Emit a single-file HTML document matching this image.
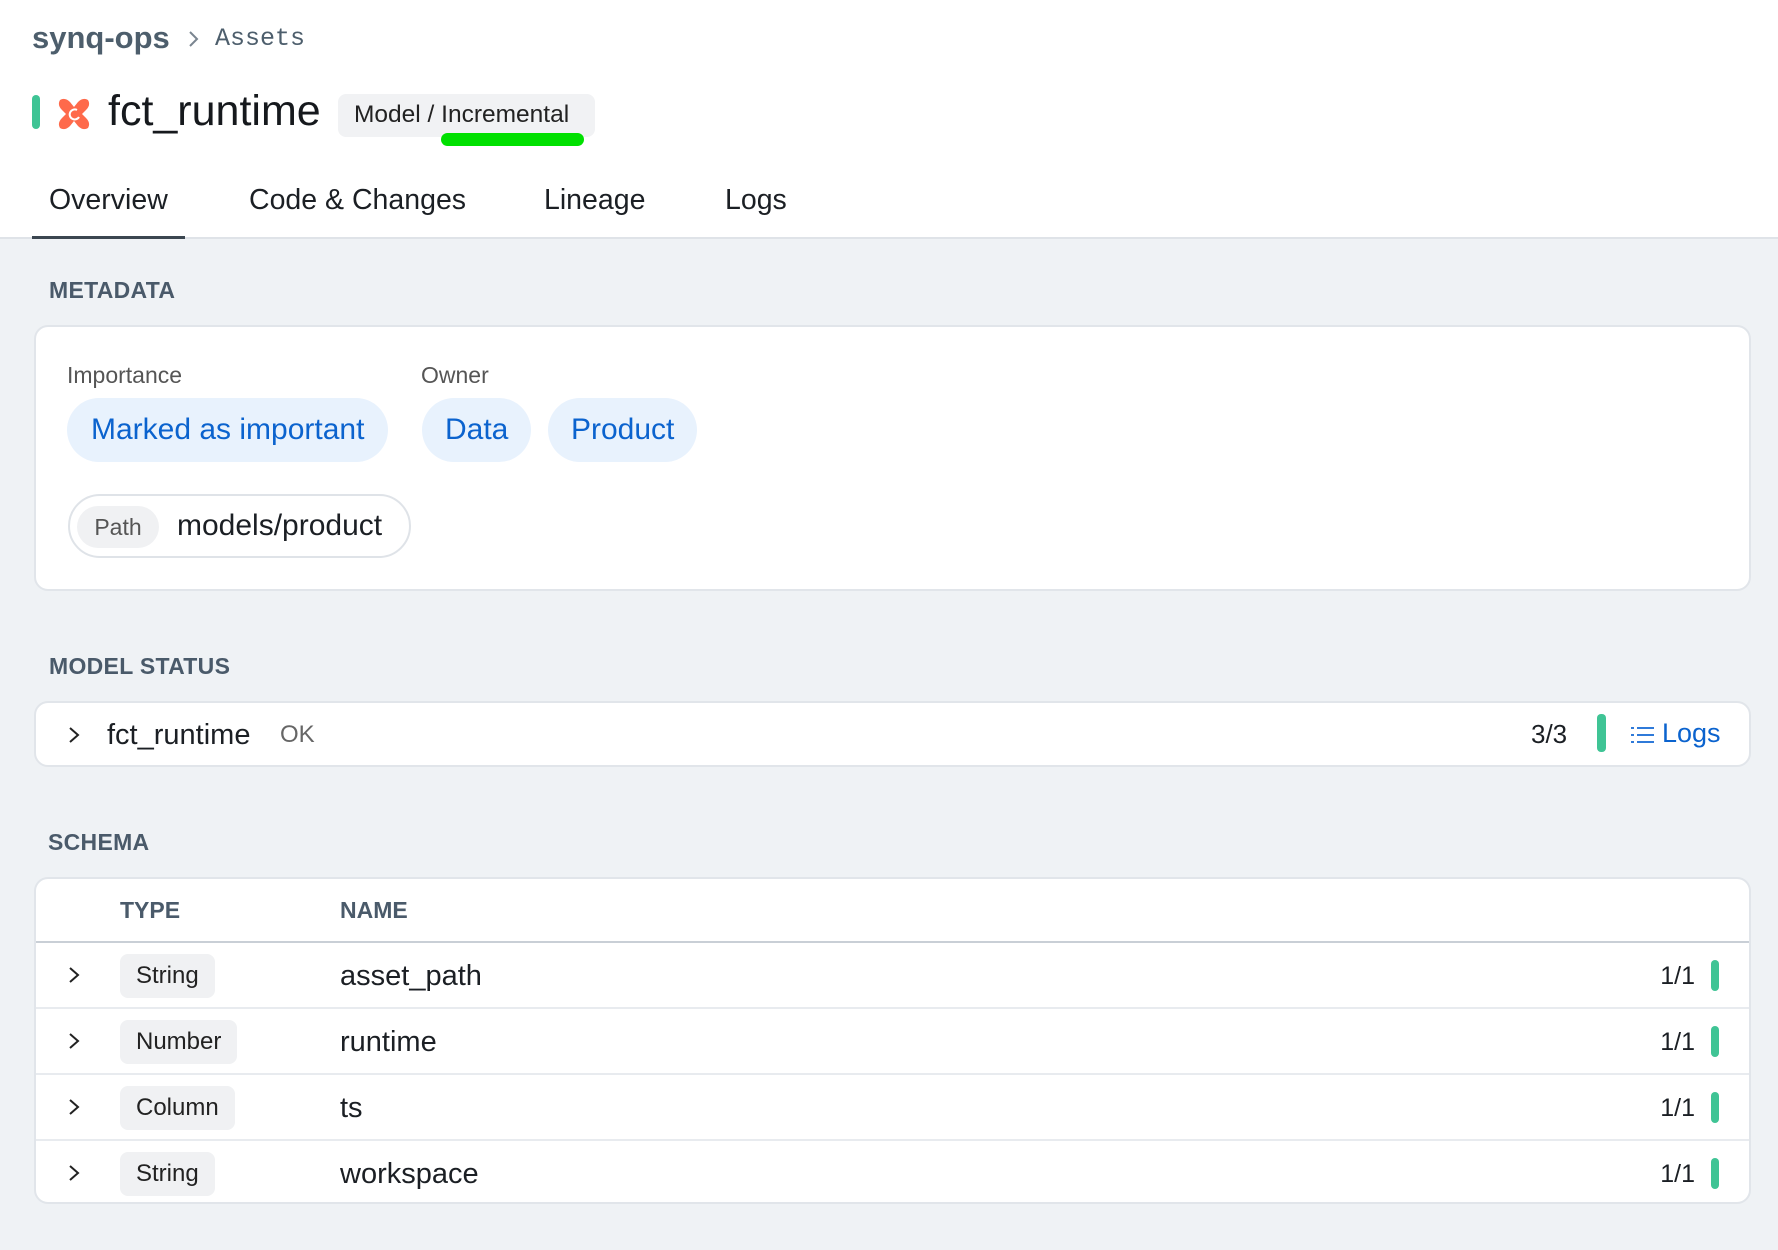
<!DOCTYPE html>
<html><head><meta charset="utf-8"><style>
*{box-sizing:border-box;margin:0;padding:0}
body{width:1778px;height:1250px;background:#eff2f5;font-family:"Liberation Sans","DejaVu Sans",sans-serif;color:#1b1f24;position:relative;overflow:hidden}
.a{position:absolute;white-space:nowrap}
.top{position:absolute;left:0;top:0;width:1778px;height:239px;background:#fff;border-bottom:2px solid #dfe3e8}
.lbl{font-size:23px;font-weight:bold;color:#4a5a6a;letter-spacing:.3px}
.card{position:absolute;left:34px;width:1717px;background:#fff;border:2px solid #e1e5ea;border-radius:14px}
.pill{position:absolute;background:#e8f2fd;color:#0b63ce;border-radius:32px;font-size:30px;height:64px;line-height:64px;padding:0 24px}
.chip{position:absolute;left:118px;background:#f0f1f3;border-radius:8px;height:44px;line-height:44px;font-size:24px;padding:0 16px;color:#222}
.row{position:absolute;left:0;width:1713px;height:66px;border-top:2px solid #e8ebef}
.nm{position:absolute;left:304px;font-size:29px;line-height:66px}
.cnt{position:absolute;right:54px;font-size:25px;line-height:66px}
.bar{position:absolute;right:30px;top:17px;width:8px;height:31px;border-radius:4px;background:#3fc495}
.chev{position:absolute;left:32px;top:23px}
</style></head><body>
<div class="top"></div>
<div class="a" style="left:32px;top:20px;font-size:31px;color:#4d5e6c;font-weight:bold">synq-ops</div>
<svg class="a" style="left:188px;top:30px" width="12" height="18"><path d="M2 2 L9 9 L2 16" stroke="#7a8590" stroke-width="2" fill="none"/></svg>
<div class="a" style="left:215px;top:24px;font-size:25px;color:#4d5e6c;font-family:'Liberation Mono',monospace">Assets</div>
<div class="a" style="left:32px;top:95px;width:8px;height:34px;border-radius:4px;background:#3fc495"></div>
<svg class="a" style="left:56px;top:97px" width="36" height="34" viewBox="0 0 36 34"><path d="M4 3 Q9 0 14 5 L18 10 L22 5 Q27 0 32 3 Q35 8 30 13 L26 17 L30 21 Q35 26 32 31 Q27 34 22 29 L18 24 L14 29 Q9 34 4 31 Q1 26 6 21 L10 17 L6 13 Q1 8 4 3Z" fill="#fe6a4b"/><path d="M21 13 a5 5 0 1 0 2 7" stroke="#fff" stroke-width="2" fill="none"/></svg>
<div class="a" style="left:108px;top:87px;font-size:43px;color:#16191d">fct_runtime</div>
<div class="a" style="left:338px;top:94px;width:257px;height:43px;border-radius:8px;background:#f1f2f4"></div>
<div class="a" style="left:441px;top:133px;width:143px;height:13px;border-radius:7px;background:#00e000"></div>
<div class="a" style="left:354px;top:101px;font-size:24.5px;color:#222">Model / Incremental</div>
<div class="a" style="left:49px;top:184px;font-size:28.5px">Overview</div>
<div class="a" style="left:249px;top:184px;font-size:28.5px">Code &amp; Changes</div>
<div class="a" style="left:544px;top:184px;font-size:28.5px">Lineage</div>
<div class="a" style="left:725px;top:184px;font-size:28.5px">Logs</div>
<div class="a" style="left:32px;top:236px;width:153px;height:3px;background:#3b4650"></div>

<div class="a lbl" style="left:49px;top:277px">METADATA</div>
<div class="card" style="top:325px;height:266px">
<div class="a" style="left:31px;top:35px;font-size:23px;color:#555">Importance</div>
<div class="a" style="left:385px;top:35px;font-size:23px;color:#555">Owner</div>
<div class="pill" style="left:31px;top:71px">Marked as important</div>
<div class="pill" style="left:386px;top:71px;padding:0 23px">Data</div>
<div class="pill" style="left:512px;top:71px;padding:0 23px">Product</div>
<div class="a" style="left:32px;top:167px;width:343px;height:64px;border:2px solid #dfe3e8;border-radius:32px"></div>
<div class="a" style="left:41px;top:179px;width:82px;height:42px;border-radius:21px;background:#f0f1f3;font-size:23px;line-height:42px;text-align:center;color:#555">Path</div>
<div class="a" style="left:141px;top:182px;font-size:30px">models/product</div>
</div>

<div class="a lbl" style="left:49px;top:653px">MODEL STATUS</div>
<div class="card" style="top:701px;height:66px">
<svg class="chev" width="12" height="18"><path d="M2 2 L10 9 L2 16" stroke="#222" stroke-width="2" fill="none"/></svg>
<div class="a" style="left:71px;top:16px;font-size:29px">fct_runtime</div>
<div class="a" style="left:244px;top:18px;font-size:24px;color:#666">OK</div>
<div class="a" style="left:1495px;top:16px;font-size:26px">3/3</div>
<div class="a" style="left:1561px;top:11px;width:9px;height:38px;border-radius:4px;background:#3fc495"></div>
<svg class="a" style="left:1595px;top:22px" width="24" height="20"><g fill="#2f7ad9"><rect x="0" y="2" width="3" height="2"/><rect x="0" y="9" width="3" height="2"/><rect x="0" y="16" width="3" height="2"/><rect x="6" y="2" width="17" height="2"/><rect x="6" y="9" width="17" height="2"/><rect x="6" y="16" width="17" height="2"/></g></svg>
<div class="a" style="left:1626px;top:15px;font-size:27px;color:#0b63ce">Logs</div>
</div>

<div class="a lbl" style="left:48px;top:829px">SCHEMA</div>
<div class="card" style="top:877px;height:327px;overflow:hidden">
<div class="a" style="left:84px;top:18px;font-size:23px;font-weight:bold;color:#4a5a6a">TYPE</div>
<div class="a" style="left:304px;top:18px;font-size:23px;font-weight:bold;color:#4a5a6a">NAME</div>
<div class="row" style="top:62px;border-top-color:#c9cfd6">
<svg class="chev" width="12" height="18"><path d="M2 2 L10 9 L2 16" stroke="#222" stroke-width="2" fill="none"/></svg>
<div class="chip" style="left:84px;top:11px">String</div><div class="nm">asset_path</div><div class="cnt">1/1</div><div class="bar"></div></div>
<div class="row" style="top:128px">
<svg class="chev" width="12" height="18"><path d="M2 2 L10 9 L2 16" stroke="#222" stroke-width="2" fill="none"/></svg>
<div class="chip" style="left:84px;top:11px">Number</div><div class="nm">runtime</div><div class="cnt">1/1</div><div class="bar"></div></div>
<div class="row" style="top:194px">
<svg class="chev" width="12" height="18"><path d="M2 2 L10 9 L2 16" stroke="#222" stroke-width="2" fill="none"/></svg>
<div class="chip" style="left:84px;top:11px">Column</div><div class="nm">ts</div><div class="cnt">1/1</div><div class="bar"></div></div>
<div class="row" style="top:260px">
<svg class="chev" width="12" height="18"><path d="M2 2 L10 9 L2 16" stroke="#222" stroke-width="2" fill="none"/></svg>
<div class="chip" style="left:84px;top:11px">String</div><div class="nm">workspace</div><div class="cnt">1/1</div><div class="bar"></div></div>
</div>
</body></html>
